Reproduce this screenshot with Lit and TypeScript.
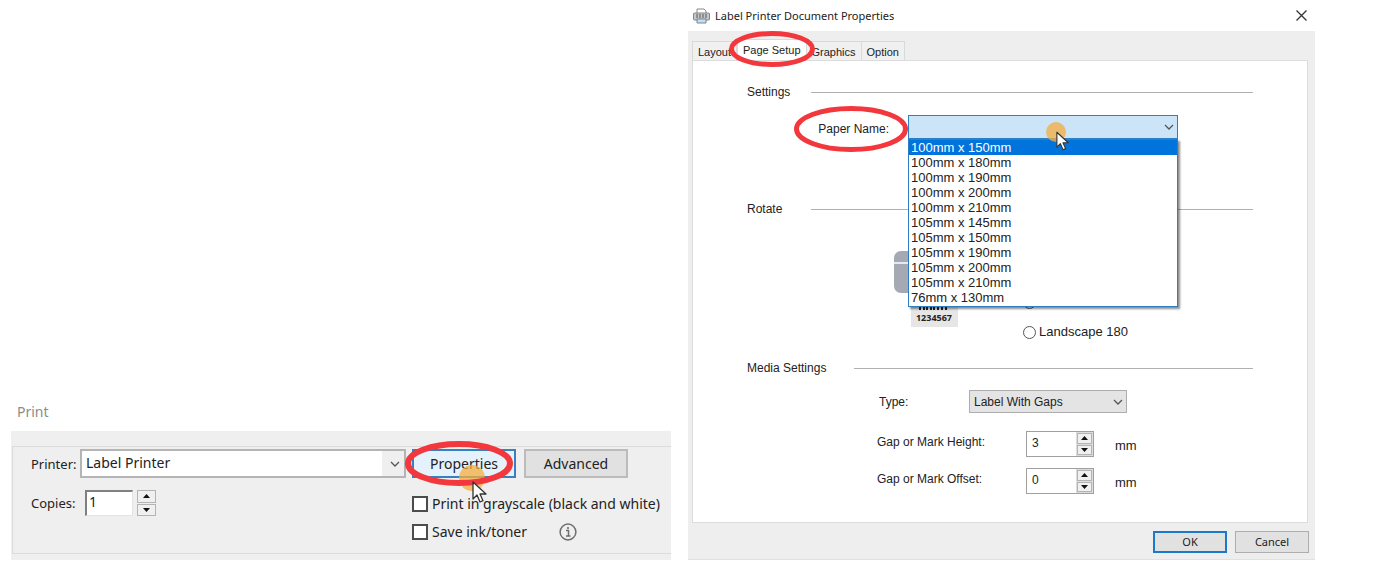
import { LitElement, html, css, svg } from "lit";
import { customElement, property, state } from "lit/decorators.js";
import { classMap } from "lit/directives/class-map.js";

const chevron = html`<svg class="chevron" viewBox="0 0 10 6" aria-hidden="true">
  <path d="M1 1l4 4 4-4" fill="none" stroke="currentColor" stroke-width="1.3" />
</svg>`;

const pointer = html`<svg class="pointer" viewBox="0 0 16 22" aria-hidden="true">
  <path d="M1 1v17l4-4 3 7 3-1.300-3-6.700h6z" fill="#fff" stroke="#333" stroke-width="1.300" stroke-linejoin="round" />
</svg>`;

const ring = (w: number, h: number, stroke: number) => html`<svg
  class="ring"
  viewBox="0 0 ${w} ${h}"
  aria-hidden="true"
>
  ${svg`<ellipse cx=${w / 2} cy=${h / 2} rx=${(w - stroke) / 2} ry=${(h - stroke) / 2}
    fill="none" stroke="#f2383c" stroke-width=${stroke} />`}
</svg>`;

const shared = css`
  * {
    box-sizing: border-box;
  }
  button,
  input,
  select {
    font: inherit;
    color: inherit;
    margin: 0;
    border-radius: 0;
    outline: none;
  }
  .combo {
    position: relative;
    display: flex;
  }
  .combo select {
    appearance: none;
    width: 100%;
    border: 1px solid #adadad;
    background: #e4e4e4;
    padding: 0 24px 0 4px;
  }
  .chevron {
    position: absolute;
    right: 4px;
    top: calc(50% - 3px);
    width: 10px;
    height: 6px;
    color: #555;
    pointer-events: none;
  }
  .ring,
  .pointer,
  .glow {
    position: absolute;
    pointer-events: none;
  }
  .glow {
    border-radius: 50%;
    background: rgba(244, 174, 62, 0.75);
  }
`;

@customElement("spin-box")
export class SpinBox extends LitElement {
  @property({ type: Number }) value = 0;
  @property() label = "";
  @property({ type: Boolean, reflect: true }) sunken = false;

  static styles = [
    shared,
    css`
      :host {
        display: flex;
        width: 68px;
        height: 26px;
        border: 1px solid #a0a0a0;
        background: #dcdcdc;
      }
      :host([sunken]) {
        width: 71px;
        border: 0;
        background: none;
        gap: 4px;
      }
      .field {
        flex: 1;
        min-width: 0;
        border: 0;
        padding: 0 0 3px 5px;
        background: #fff;
      }
      :host([sunken]) .field {
        border: 1px solid #e4e4e4;
        border-top: 2px solid #808080;
        border-left: 2px solid #808080;
        padding: 0 0 3px 2px;
      }
      .steps {
        display: flex;
        flex-direction: column;
        width: 17px;
        padding: 1px;
        gap: 1px;
      }
      :host([sunken]) .steps {
        width: 19px;
        padding: 0;
      }
      .step {
        flex: 1;
        display: flex;
        align-items: center;
        justify-content: center;
        min-height: 0;
        padding: 0;
        border: 1px solid #b4b4b4;
        background: #f0f0f0;
      }
      .step svg {
        width: 7px;
        height: 4px;
      }
    `,
  ];

  render() {
    return html`
      <input
        class="field"
        type="text"
        inputmode="numeric"
        aria-label=${this.label}
        .value=${String(this.value)}
        @change=${(e: Event) => (this.value = Number((e.target as HTMLInputElement).value) || 0)}
      />
      <span class="steps">
        <button class="step" aria-label="Increase ${this.label}" @click=${() => this.value++}>
          <svg viewBox="0 0 7 4"><path d="M0 4L3.500 0 7 4z" fill="#111" /></svg>
        </button>
        <button class="step" aria-label="Decrease ${this.label}" @click=${() => (this.value = Math.max(0, this.value - 1))}>
          <svg viewBox="0 0 7 4"><path d="M0 0L3.500 4 7 0z" fill="#111" /></svg>
        </button>
      </span>
    `;
  }
}

@customElement("print-window")
export class PrintWindow extends LitElement {
  static styles = [
    shared,
    css`
      :host {
        display: block;
        font: 14px/20px "Noto Sans", "Open Sans", sans-serif;
        color: #222;
      }
      .title {
        margin: 0;
        padding: 0 6px 9px;
        font-size: 14px;
        font-weight: 400;
        color: #8c8c8c;
      }
      .body {
        background: #efefef;
        padding: 15px 0 6px 1px;
      }
      .group {
        display: grid;
        grid-template-columns: 1fr 259px;
        column-gap: 6px;
        border: 1px solid #dcdcdc;
        border-right: 0;
        padding: 2px 0 11px 18px;
      }
      .line {
        display: flex;
        align-items: center;
      }
      .name {
        flex: none;
        width: 49px;
        font-size: 13px;
      }
      .copies {
        width: 54px;
      }
      .combo {
        flex: 1;
      }
      .combo select {
        height: 29px;
        border: 2px solid #b4b4b4;
        background: linear-gradient(to left, #efefef 22px, #fff 22px);
        padding-bottom: 2px;
      }
      .chevron {
        right: 6px;
      }
      .buttons {
        display: flex;
        gap: 8px;
      }
      .button {
        width: 104px;
        height: 29px;
        padding: 0;
        border: 2px solid #bcbcbc;
        background: #e1e1e1;
      }
      .hot {
        position: relative;
        display: flex;
      }
      .hot .button {
        border-color: #3a7fc0;
        background: #e5f1fb;
      }
      .hot .ring {
        left: -7px;
        top: -8px;
        width: 108px;
        height: 45px;
      }
      .hot .glow {
        left: 47px;
        top: 16px;
        width: 26px;
        height: 26px;
      }
      .hot .pointer {
        left: 60px;
        top: 32px;
        width: 16px;
        height: 22px;
      }
      .second {
        align-self: start;
        margin-top: 12px;
      }
      .checks {
        display: grid;
        row-gap: 8px;
        padding-top: 16px;
      }
      .check {
        display: flex;
        align-items: center;
        gap: 4px;
        white-space: nowrap;
      }
      .check input {
        appearance: none;
        width: 16px;
        height: 16px;
        border: 2px solid #4c4c4c;
        background: #fff;
      }
      .check input:checked {
        background: #4c4c4c;
      }
      .row {
        display: flex;
        align-items: center;
        gap: 32px;
      }
      .info {
        display: flex;
        padding: 0;
        border: 0;
        background: none;
      }
      .info svg {
        width: 18px;
        height: 18px;
      }
    `,
  ];

  render() {
    return html`
      <h1 class="title">Print</h1>
      <div class="body">
        <div class="group">
          <div class="line">
            <label class="name" for="printer">Printer:</label>
            <span class="combo">
              <select id="printer"><option>Label Printer</option></select>
              ${chevron}
            </span>
          </div>
          <div class="buttons">
            <span class="hot">
              <button class="button">Properties</button>
              <span class="glow"></span>
              ${ring(108, 45, 6)} ${pointer}
            </span>
            <button class="button">Advanced</button>
          </div>
          <div class="line second">
            <span class="name copies">Copies:</span>
            <spin-box sunken label="Copies" .value=${1}></spin-box>
          </div>
          <div class="checks">
            <label class="check"><input type="checkbox" />Print in grayscale (black and white)</label>
            <div class="row">
              <label class="check"><input type="checkbox" />Save ink/toner</label>
              <button class="info" aria-label="About saving ink">
                <svg viewBox="0 0 18 18" aria-hidden="true">
                  <circle cx="9" cy="9" r="7.900" fill="none" stroke="#6e6e6e" stroke-width="1.500" />
                  <path d="M7 7.500h2.500V13M7 13h4.500" fill="none" stroke="#6e6e6e" stroke-width="1.500" />
                  <circle cx="9" cy="5" r="1.100" fill="#6e6e6e" />
                </svg>
              </button>
            </div>
          </div>
        </div>
      </div>
    `;
  }
}

const TABS = ["Layout", "Page Setup", "Graphics", "Option"];
const SIZES = [
  "100mm x 150mm",
  "100mm x 180mm",
  "100mm x 190mm",
  "100mm x 200mm",
  "100mm x 210mm",
  "105mm x 145mm",
  "105mm x 150mm",
  "105mm x 190mm",
  "105mm x 200mm",
  "105mm x 210mm",
  "76mm x 130mm",
];

@customElement("properties-window")
export class PropertiesWindow extends LitElement {
  @state() tab = "Page Setup";
  @state() size = SIZES[0];

  static styles = [
    shared,
    css`
      :host {
        display: block;
        font: 12px/20px "Liberation Sans", Arial, sans-serif;
        color: #222;
      }
      .titlebar {
        display: flex;
        align-items: center;
        gap: 5px;
        height: 31px;
        padding: 0 7px 0 5px;
        font: 11px/20px "Noto Sans", "Open Sans", sans-serif;
      }
      .titlebar h1 {
        flex: 1;
        margin: 0;
        font: inherit;
      }
      .app {
        width: 17px;
        height: 16px;
      }
      .close {
        display: flex;
        padding: 0;
        border: 0;
        background: none;
      }
      .close svg {
        width: 13px;
        height: 13px;
      }
      .frame {
        background: #eeeeee;
        padding: 8px 7px 6px 4px;
        border-bottom: 1px solid #d6e4f0;
      }
      .tabs {
        display: flex;
        align-items: flex-end;
        height: 21px;
      }
      .tab {
        height: 19px;
        padding: 0 5px;
        border: 1px solid #d9d9d9;
        border-bottom: 0;
        border-left: 0;
        background: #f0f0f0;
        font-size: 11px;
      }
      .tab:first-child {
        border-left: 1px solid #d9d9d9;
      }
      .picked {
        position: relative;
        display: flex;
      }
      .picked .tab {
        height: 21px;
        padding-bottom: 3px;
        background: #fff;
      }
      .picked .ring {
        left: -8px;
        top: -8px;
        width: 86px;
        height: 36px;
        z-index: 1;
      }
      .page {
        background: #fff;
        border: 1px solid #dcdcdc;
        padding: 21px 54px 28px;
      }
      .heading {
        display: flex;
        align-items: center;
        gap: 19px;
      }
      .heading h2 {
        margin: 0;
        min-width: 45px;
        font: inherit;
      }
      .heading::after {
        content: "";
        flex: 1;
        border-top: 1px solid #b0b0b0;
      }
      .wide {
        gap: 28px;
      }
      .paper {
        display: grid;
        grid-template-columns: 161px 1fr;
        align-items: center;
        padding: 13px 75px 60px 0;
        font-size: 13px;
      }
      .paper-name {
        position: relative;
        justify-self: end;
        margin-right: 19px;
        padding-top: 4px;
        font-size: 12px;
      }
      .paper-name .ring {
        right: -19px;
        top: -9px;
        width: 114px;
        height: 46px;
        z-index: 3;
      }
      .paper .combo select {
        height: 24px;
        border-color: #2d7fc4;
        background: #cce4f7;
      }
      .paper .glow {
        left: 138px;
        top: 7px;
        width: 20px;
        height: 20px;
        z-index: 3;
      }
      .paper .pointer {
        left: 148px;
        top: 16px;
        width: 14px;
        height: 20px;
        z-index: 4;
      }
      .list {
        position: absolute;
        z-index: 2;
        top: 100%;
        left: 0;
        right: 0;
        margin: 0;
        padding: 0 0 1px;
        list-style: none;
        background: #fff;
        border: 1px solid #2d7fc4;
        box-shadow: 2px 2px 2px rgba(0, 0, 0, 0.45);
        line-height: 15px;
      }
      .option {
        padding: 0 2px;
      }
      .on {
        background: #0074dc;
        color: #fff;
      }
      .rotate {
        display: flex;
        align-items: flex-start;
        padding: 32px 0 16px 147px;
      }
      .preview {
        width: 64px;
        height: 76px;
      }
      .turns {
        display: grid;
        row-gap: 10px;
        padding: 41px 0 0 65px;
        font-size: 13px;
      }
      .turn {
        display: flex;
        align-items: center;
        gap: 3px;
        height: 20px;
      }
      .turn input {
        appearance: none;
        width: 13px;
        height: 13px;
        border: 1px solid #555;
        border-radius: 50%;
        background: #fff;
      }
      .turn input:checked {
        background: radial-gradient(#333 3px, #fff 4px);
      }
      .media {
        display: grid;
        row-gap: 11px;
        padding: 12px 0 0 130px;
      }
      .field {
        display: flex;
        align-items: center;
      }
      .field .label {
        width: 149px;
        padding-bottom: 4px;
      }
      .field .kind {
        width: 92px;
        padding-left: 2px;
      }
      .field:first-child {
        margin-bottom: 7px;
      }
      .field .combo {
        width: 158px;
      }
      .field .combo select {
        height: 23px;
      }
      .unit {
        padding: 4px 0 0 21px;
        line-height: 16px;
        font-size: 13px;
      }
      .actions {
        display: flex;
        justify-content: flex-end;
        gap: 8px;
        padding-top: 8px;
        margin-right: -1px;
      }
      .action {
        width: 74px;
        height: 22px;
        padding: 0;
        border: 1px solid #adadad;
        background: #e1e1e1;
        font: 11px/18px "Noto Sans", "Open Sans", sans-serif;
      }
      .default {
        border: 2px solid #1c78c8;
      }
    `,
  ];

  private renderTab(name: string) {
    const selected = name === this.tab;
    const button = html`<button
      class="tab"
      role="tab"
      aria-selected=${selected}
      @click=${() => (this.tab = name)}
    >
      ${name}
    </button>`;
    return selected ? html`<span class="picked">${button}${ring(86, 36, 5)}</span>` : button;
  }

  render() {
    return html`
      <header class="titlebar">
        <svg class="app" viewBox="0 0 17 16" aria-hidden="true">
          <path d="M4 5V1h7l2 2v2" fill="#fff" stroke="#888" />
          <rect x="0.500" y="5" width="16" height="7" rx="1" fill="#c4c8cc" stroke="#80858a" />
          <path d="M3 7h11M3 9h11" stroke="#555" stroke-width="1.200" stroke-dasharray="2 1" />
          <path d="M4 11h9v4H4z" fill="#bfe0f2" stroke="#80858a" />
        </svg>
        <h1>Label Printer Document Properties</h1>
        <button class="close" aria-label="Close">
          <svg viewBox="0 0 13 13"><path d="M1.500 1.500l10 10M11.500 1.500l-10 10" stroke="#333" stroke-width="1.300" /></svg>
        </button>
      </header>
      <div class="frame">
        <div class="tabs" role="tablist">${TABS.map((t) => this.renderTab(t))}</div>
        <div class="page">
          <div class="heading"><h2>Settings</h2></div>
          <div class="paper">
            <label class="paper-name" for="paper">Paper Name:${ring(114, 46, 5)}</label>
            <div class="combo">
              <select id="paper"><option></option></select>
              ${chevron}
              <ul class="list" role="listbox" aria-label="Paper sizes">
                ${SIZES.map(
                  (s) => html`<li
                    class=${classMap({ option: true, on: s === this.size })}
                    role="option"
                    aria-selected=${s === this.size}
                    @click=${() => (this.size = s)}
                  >
                    ${s}
                  </li>`
                )}
              </ul>
              <span class="glow"></span>
              ${pointer}
            </div>
          </div>
          <div class="heading"><h2>Rotate</h2></div>
          <div class="rotate">
            <svg class="preview" viewBox="0 0 64 76" aria-hidden="true">
              <rect width="64" height="42" rx="7" fill="#a4a9b4" />
              <path d="M0 12h64" stroke="#fff" stroke-width="1.500" />
              <rect x="17" y="42" width="47" height="34" fill="#e6e6e6" />
              <path d="M26 50v9M30 50v9M33 50v9M37 50v9M40 50v9M44 50v9M48 50v9M52 50v9" stroke="#222" stroke-width="2" />
              <text x="40" y="70" text-anchor="middle" font-family="Noto Sans, sans-serif" font-size="9" font-weight="700" fill="#222">1234567</text>
            </svg>
            <div class="turns">
              <span class="turn"><input type="radio" name="turn" aria-label="Portrait" /></span>
              <label class="turn"><input type="radio" name="turn" />Landscape 180</label>
            </div>
          </div>
          <div class="heading wide"><h2>Media Settings</h2></div>
          <div class="media">
            <div class="field">
              <label class="kind" for="kind">Type:</label>
              <span class="combo">
                <select id="kind"><option>Label With Gaps</option></select>
                ${chevron}
              </span>
            </div>
            <div class="field">
              <span class="label">Gap or Mark Height:</span>
              <spin-box label="Gap or Mark Height" .value=${3}></spin-box>
              <span class="unit">mm</span>
            </div>
            <div class="field">
              <span class="label">Gap or Mark Offset:</span>
              <spin-box label="Gap or Mark Offset" .value=${0}></spin-box>
              <span class="unit">mm</span>
            </div>
          </div>
        </div>
        <div class="actions">
          <button class="action default">OK</button>
          <button class="action">Cancel</button>
        </div>
      </div>
    `;
  }
}

@customElement("app-root")
export class AppRoot extends LitElement {
  static styles = css`
    :host {
      display: block;
      background: #fff;
    }
    .desk {
      display: grid;
      grid-template-columns: 660fr 627fr;
      column-gap: 17px;
      align-items: end;
      padding: 0 83px 9px 11px;
    }
  `;

  render() {
    return html`<main class="desk">
      <print-window></print-window>
      <properties-window></properties-window>
    </main>`;
  }
}
